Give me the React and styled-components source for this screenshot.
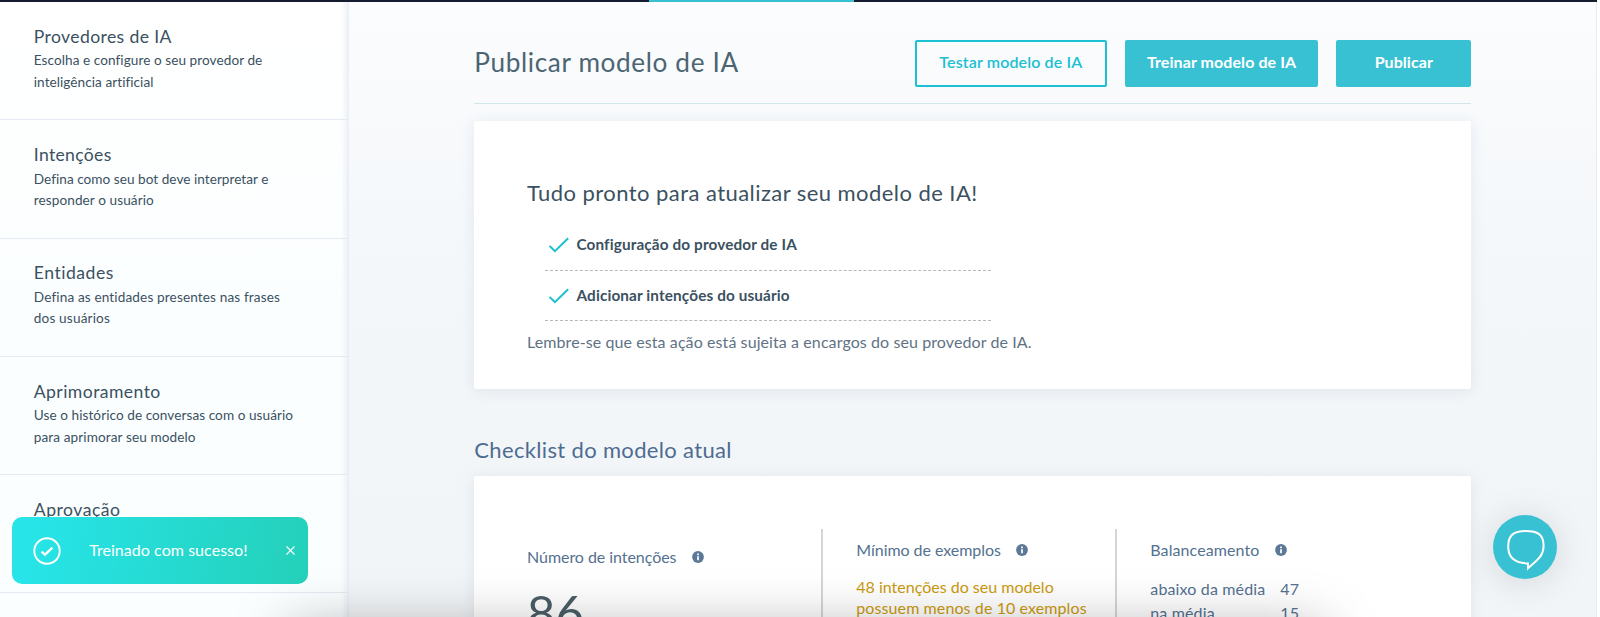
import React from "react";
import styled, { createGlobalStyle } from "styled-components";

const GlobalStyle = createGlobalStyle`
  *, *::before, *::after { box-sizing: border-box; }
  html, body, #root { height: 100%; }
  body {
    margin: 0;
    overflow: hidden;
    font-family: Lato, "Open Sans", sans-serif;
    color: #3b515f;
    background: #fff;
  }
  h1, h2, h3, p { margin: 0; font-weight: 400; white-space: nowrap; }
`;

const Page = styled.div`
  position: relative;
  height: 617px;
  padding-right: 3px;
  overflow: hidden;
  display: flex;
  flex-direction: column;
`;

const TopBar = styled.div`
  height: 2px;
  flex: none;
  background: #161c30;
  padding-left: 649px;
`;

const TopBarActive = styled.div`
  width: 205px;
  height: 2px;
  background: #38c1d3;
`;

const Body = styled.div`
  flex: 1;
  min-height: 0;
  display: flex;
`;

const Sidebar = styled.nav`
  flex: none;
  width: 349px;
  overflow: hidden;
  border-right: 1px solid #e9edf4;
  background: linear-gradient(90deg, rgba(228, 234, 244, 0) 341px, rgba(228, 234, 244, 0.65) 348px),
    linear-gradient(180deg, #ffffff 0%, #fafeff 65%, #fafeff 100%);
`;

const SidebarItem = styled.div`
  height: 118.25px;
  padding: 22.8px 0 0 33.8px;
  border-bottom: 1px solid #e5eaf2;
`;

const SidebarTitle = styled.h3`
  font-size: 17.6px;
  line-height: 24px;
  letter-spacing: ${(p) => p.$ls}px;
`;

const SidebarText = styled.p`
  margin-top: ${(p) => (p.$first ? 1.6 : 0)}px;
  font-size: 13.6px;
  line-height: 21.4px;
  letter-spacing: ${(p) => p.$ls}px;
`;

const Main = styled.main`
  flex: 1;
  min-width: 0;
  padding: 37.6px 124.7px 0 125.3px;
  border-right: 1px solid #e9edef;
  background: linear-gradient(180deg, #fbfcfe 0%, #f5f8fa 35%, #f3f6f8 60%, #f2f5f7 100%);
`;

const Header = styled.header`
  display: flex;
  align-items: center;
  height: 64.7px;
  padding-bottom: 16.7px;
  border-bottom: 1px solid #d0e6e9;
`;

const PageTitle = styled.h1`
  flex: 1;
  padding-bottom: 2.6px;
  font-size: 26.2px;
  line-height: 32px;
  letter-spacing: 0.62px;
  color: #4c6572;
`;

const Button = styled.button`
  width: ${(p) => p.$width}px;
  height: 47px;
  margin-left: 18.5px;
  padding: 0 0 3px;
  border: 2px solid ${(p) => (p.$outline ? "#1bc0d2" : "#38c1d3")};
  border-radius: 2px;
  background: ${(p) => (p.$outline ? "transparent" : "#38c1d3")};
  color: ${(p) => (p.$outline ? "#1bc0d2" : "#fff")};
  font-family: inherit;
  font-size: 16px;
  font-weight: ${(p) => (p.$outline ? 600 : 700)};
  letter-spacing: ${(p) => p.$ls}px;
  white-space: nowrap;
`;

const Card = styled.section`
  height: ${(p) => p.$height}px;
  margin-top: ${(p) => p.$top}px;
  padding: ${(p) => p.$padding};
  border-radius: 2px;
  background: #fff;
  box-shadow: 0 2px 14px rgba(130, 155, 190, 0.18);
`;

const CardTitle = styled.h2`
  margin-bottom: 12.7px;
  font-size: 22px;
  line-height: 28px;
  letter-spacing: 0.44px;
`;

const CheckRow = styled.div`
  display: flex;
  align-items: center;
  width: 446px;
  height: 50.7px;
  margin-left: 18px;
  padding-left: 4px;
  border-bottom: 1px dashed #b3b8bc;
`;

const CheckLabel = styled.p`
  margin-left: 6.5px;
  padding-bottom: 1px;
  font-size: 15.3px;
  font-weight: 700;
  line-height: 20px;
  letter-spacing: 0.13px;
`;

const Note = styled.p`
  margin-top: 10px;
  font-size: 16px;
  line-height: 21px;
  letter-spacing: 0.09px;
  color: #5f7285;
`;

const SectionTitle = styled.h2`
  margin-top: 47px;
  font-size: 22px;
  line-height: 28px;
  letter-spacing: 0.34px;
  color: #4d6c91;
`;

const Stats = styled.div`
  display: flex;
`;

const Stat = styled.div`
  flex: none;
  width: 294px;
  height: 140px;
  padding: ${(p) => p.$padding};
  border-left: ${(p) => (p.$divided ? "2px solid #d5d5d5" : "none")};
  color: #54718f;
`;

const StatHead = styled.div`
  display: flex;
  align-items: center;
  gap: 15.5px;

  svg {
    margin-top: 2px;
  }
`;

const StatLabel = styled.p`
  font-size: 16px;
  line-height: 21px;
  letter-spacing: ${(p) => p.$ls}px;
`;

const StatNumber = styled.p`
  margin-top: 15px;
  font-size: 49px;
  line-height: 60px;
  color: #4b5f66;
`;

const Warning = styled.p`
  margin-top: 16.5px;
  font-size: 16px;
  line-height: 21.3px;
  letter-spacing: ${(p) => p.$ls}px;
  color: #cb9a0e;

  & + & {
    margin-top: 0;
  }
`;

const BalanceTable = styled.div`
  display: grid;
  grid-template-columns: 130px auto;
  margin-top: 17px;
  font-size: 16px;
  line-height: 24.5px;
  letter-spacing: 0.15px;
  white-space: nowrap;
`;

const BottomShade = styled.div`
  position: absolute;
  left: 290px;
  top: 630px;
  width: 1032px;
  height: 60px;
  box-shadow: 0 0 56px rgba(0, 0, 0, 0.34);
`;

const Toast = styled.div`
  position: absolute;
  left: 11.5px;
  top: 517px;
  width: 296px;
  height: 67px;
  display: flex;
  align-items: center;
  padding: 0 12.5px 0 21.9px;
  border-radius: 10px;
  background: linear-gradient(100deg, #27e4e8 0%, #27e4e8 8%, #24d0b9 100%);
  color: #fff;
`;

const ToastText = styled.p`
  flex: 1;
  margin-left: 27.8px;
  padding-bottom: 2px;
  font-size: 16px;
  line-height: 20px;
  letter-spacing: 0.05px;
`;

const ChatButton = styled.div`
  position: absolute;
  left: 1493px;
  top: 514.5px;
  width: 64px;
  height: 64px;
  border-radius: 50%;
  background: #38c1d3;
  box-shadow: 0 3px 36px rgba(0, 0, 0, 0.13);
`;

const CheckIcon = () => (
  <svg width="21" height="16" viewBox="0 0 21 16" fill="none">
    <path d="M0.6 8.9 L5.9 14.2 L19.2 1.2" stroke="#1bc0d2" strokeWidth="2" />
  </svg>
);

const InfoIcon = () => (
  <svg width="12" height="12" viewBox="0 0 12 12">
    <circle cx="6" cy="6" r="5.9" fill="#5b7896" />
    <path d="M5 2.6h2v1.6H5zM5 5.2h2v4H5z" fill="#e8edf2" />
  </svg>
);

const ToastCheck = () => (
  <svg width="28" height="28" viewBox="0 0 28 28" fill="none" stroke="#fff">
    <circle cx="14" cy="14" r="12.7" strokeWidth="1.9" />
    <path d="M8.6 14.6 L12 17.7 L19.4 10.7" strokeWidth="2.3" />
  </svg>
);

const CloseIcon = () => (
  <svg width="9" height="9" viewBox="0 0 9 9" stroke="#fff" strokeWidth="1.1">
    <path d="M0.5 0.5 L8.5 8.5 M8.5 0.5 L0.5 8.5" />
  </svg>
);

const ChatIcon = () => (
  <svg width="64" height="64" viewBox="0 0 64 64" fill="none">
    <path
      d="M32.8 16 C44.5 16 50.6 19.5 50.6 30.5 C50.6 42 43.5 45 35 53.4 V48.4 C20.5 48.2 15.2 42 15.2 31.5 C15.2 19.8 21 16 32.8 16 Z"
      stroke="#fff"
      strokeWidth="2"
    />
  </svg>
);

const sections = [
  {
    title: "Provedores de IA",
    ls: 0.37,
    lines: [
      { text: "Escolha e configure o seu provedor de", ls: 0.06 },
      { text: "inteligência artificial", ls: 0.05 },
    ],
  },
  {
    title: "Intenções",
    ls: 0.32,
    lines: [
      { text: "Defina como seu bot deve interpretar e", ls: 0.03 },
      { text: "responder o usuário", ls: 0.08 },
    ],
  },
  {
    title: "Entidades",
    ls: 0.5,
    lines: [
      { text: "Defina as entidades presentes nas frases", ls: 0.13 },
      { text: "dos usuários", ls: 0.16 },
    ],
  },
  {
    title: "Aprimoramento",
    ls: 0.42,
    lines: [
      { text: "Use o histórico de conversas com o usuário", ls: 0.06 },
      { text: "para aprimorar seu modelo", ls: 0.1 },
    ],
  },
  { title: "Aprovação", ls: 0.5, lines: [] },
];

const checks = ["Configuração do provedor de IA", "Adicionar intenções do usuário"];

export default function App() {
  return (
    <Page>
      <GlobalStyle />
      <TopBar>
        <TopBarActive />
      </TopBar>
      <Body>
        <Sidebar>
          {sections.map((s) => (
            <SidebarItem key={s.title}>
              <SidebarTitle $ls={s.ls}>{s.title}</SidebarTitle>
              {s.lines.map((l, i) => (
                <SidebarText key={l.text} $first={i === 0} $ls={l.ls}>
                  {l.text}
                </SidebarText>
              ))}
            </SidebarItem>
          ))}
        </Sidebar>
        <Main>
          <Header>
            <PageTitle>Publicar modelo de IA</PageTitle>
            <Button $outline $width={192} $ls={0.13}>
              Testar modelo de IA
            </Button>
            <Button $width={192.5} $ls={0.08}>
              Treinar modelo de IA
            </Button>
            <Button $width={135} $ls={0.06}>
              Publicar
            </Button>
          </Header>
          <Card $height={268} $top={17} $padding="58px 0 0 52.7px">
            <CardTitle>Tudo pronto para atualizar seu modelo de IA!</CardTitle>
            {checks.map((c) => (
              <CheckRow key={c}>
                <CheckIcon />
                <CheckLabel>{c}</CheckLabel>
              </CheckRow>
            ))}
            <Note>Lembre-se que esta ação está sujeita a encargos do seu provedor de IA.</Note>
          </Card>
          <SectionTitle>Checklist do modelo atual</SectionTitle>
          <Card $height={200} $top={11.9} $padding="53px 0 0 52.7px">
            <Stats>
              <Stat $padding="16.5px 0 0">
                <StatHead>
                  <StatLabel $ls={-0.05}>Número de intenções</StatLabel>
                  <InfoIcon />
                </StatHead>
                <StatNumber>86</StatNumber>
              </Stat>
              <Stat $divided $padding="9.5px 0 0 33.3px">
                <StatHead>
                  <StatLabel $ls={-0.05}>Mínimo de exemplos</StatLabel>
                  <InfoIcon />
                </StatHead>
                <Warning $ls={0}>48 intenções do seu modelo</Warning>
                <Warning $ls={0.1}>possuem menos de 10 exemplos</Warning>
              </Stat>
              <Stat $divided $padding="9.5px 0 0 33.3px">
                <StatHead>
                  <StatLabel $ls={0.1}>Balanceamento</StatLabel>
                  <InfoIcon />
                </StatHead>
                <BalanceTable>
                  <span>abaixo da média</span>
                  <span>47</span>
                  <span>na média</span>
                  <span>15</span>
                </BalanceTable>
              </Stat>
            </Stats>
          </Card>
        </Main>
      </Body>
      <BottomShade />
      <Toast>
        <ToastCheck />
        <ToastText>Treinado com sucesso!</ToastText>
        <CloseIcon />
      </Toast>
      <ChatButton>
        <ChatIcon />
      </ChatButton>
    </Page>
  );
}
